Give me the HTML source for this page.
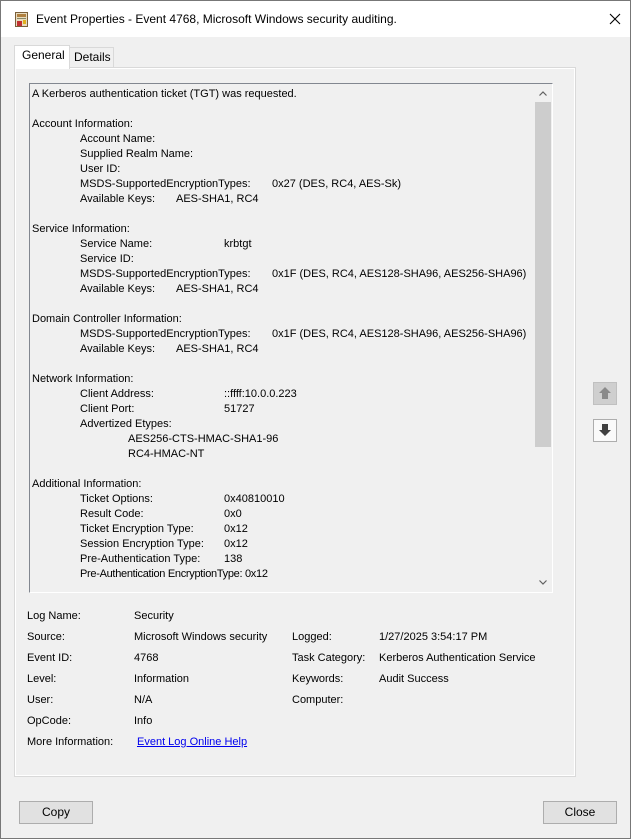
<!DOCTYPE html>
<html><head><meta charset="utf-8"><style>
*{margin:0;padding:0;box-sizing:border-box}
body{width:631px;height:839px;background:#fff;font-family:"Liberation Sans",sans-serif;font-size:11px;color:#000;position:relative;overflow:hidden}
.a{position:absolute;white-space:pre}
#win{position:absolute;left:0;top:0;width:631px;height:839px;border:1px solid #777;background:#f0f0f0}
#title{position:absolute;left:0;top:0;width:629px;height:36px;background:#fff}
.t{position:absolute;white-space:pre;line-height:15px}
.btn{position:absolute;background:#e1e1e1;border:1px solid #adadad;text-align:center;line-height:20px;font-size:12px}
</style></head><body>
<div id="win">
<div id="title">
<svg class="a" style="left:14px;top:11px" width="14" height="15" viewBox="0 0 14 15"><rect x="0.5" y="0.5" width="12" height="14" fill="#e8dcc0" stroke="#7a5f3a"/><rect x="2" y="2" width="9" height="3" fill="#b08040"/><rect x="2" y="6" width="9" height="1" fill="#886"/><rect x="2" y="9" width="5" height="5" fill="#c03030"/><rect x="8" y="8" width="3" height="4" fill="#e0b020"/></svg>
<div class="a" style="left:35px;top:11px;font-size:12px">Event Properties - Event 4768, Microsoft Windows security auditing.</div>
<svg class="a" style="left:608px;top:12px" width="12" height="12" viewBox="0 0 12 12"><path d="M1 1 L11 11 M11 1 L1 11" stroke="#000" stroke-width="1.1"/></svg>
</div>
<div class="a" style="left:13px;top:44px;width:56px;height:24px;background:#fff;border:1px solid #d9d9d9;border-bottom:none;z-index:2"></div>
<div class="a" style="left:21px;top:47px;font-size:12px;z-index:3">General</div>
<div class="a" style="left:68px;top:46px;width:45px;height:21px;background:#f0f0f0;border:1px solid #d9d9d9;border-bottom:none"></div>
<div class="a" style="left:73px;top:49px;font-size:12px">Details</div>
<div class="a" style="left:13px;top:66px;width:562px;height:710px;background:#f0f0f0;border:1px solid #d9d9d9;box-shadow:inset 0 0 0 1px #fff"></div>
<div class="a" style="left:28px;top:82px;width:524px;height:510px;background:#f0f0f0;border:1px solid #828790;border-right-color:#fff;border-bottom-color:#fff;overflow:hidden">
<div class="a" style="left:504px;top:0;width:18px;height:508px;background:#f0f0f0"></div>
<div class="a" style="left:505px;top:18px;width:16px;height:345px;background:#cdcdcd"></div>
<svg class="a" style="left:509px;top:7px" width="8" height="5" viewBox="0 0 8 5"><path d="M0.5 4.5 L4 1 L7.5 4.5" stroke="#606060" fill="none" stroke-width="1.2"/></svg>
<svg class="a" style="left:509px;top:496px" width="8" height="5" viewBox="0 0 8 5"><path d="M0.5 0.5 L4 4 L7.5 0.5" stroke="#606060" fill="none" stroke-width="1.2"/></svg>
<div class="t" style="left:2px;top:3px">A Kerberos authentication ticket (TGT) was requested.</div>
<div class="t" style="left:2px;top:33px">Account Information:</div>
<div class="t" style="left:50px;top:48px">Account Name:</div>
<div class="t" style="left:50px;top:63px">Supplied Realm Name:</div>
<div class="t" style="left:50px;top:78px">User ID:</div>
<div class="t" style="left:50px;top:93px">MSDS-SupportedEncryptionTypes:</div><div class="t" style="left:242px;top:93px">0x27 (DES, RC4, AES-Sk)</div>
<div class="t" style="left:50px;top:108px">Available Keys:</div><div class="t" style="left:146px;top:108px">AES-SHA1, RC4</div>
<div class="t" style="left:2px;top:138px">Service Information:</div>
<div class="t" style="left:50px;top:153px">Service Name:</div><div class="t" style="left:194px;top:153px">krbtgt</div>
<div class="t" style="left:50px;top:168px">Service ID:</div>
<div class="t" style="left:50px;top:183px">MSDS-SupportedEncryptionTypes:</div><div class="t" style="left:242px;top:183px">0x1F (DES, RC4, AES128-SHA96, AES256-SHA96)</div>
<div class="t" style="left:50px;top:198px">Available Keys:</div><div class="t" style="left:146px;top:198px">AES-SHA1, RC4</div>
<div class="t" style="left:2px;top:228px">Domain Controller Information:</div>
<div class="t" style="left:50px;top:243px">MSDS-SupportedEncryptionTypes:</div><div class="t" style="left:242px;top:243px">0x1F (DES, RC4, AES128-SHA96, AES256-SHA96)</div>
<div class="t" style="left:50px;top:258px">Available Keys:</div><div class="t" style="left:146px;top:258px">AES-SHA1, RC4</div>
<div class="t" style="left:2px;top:288px">Network Information:</div>
<div class="t" style="left:50px;top:303px">Client Address:</div><div class="t" style="left:194px;top:303px">::ffff:10.0.0.223</div>
<div class="t" style="left:50px;top:318px">Client Port:</div><div class="t" style="left:194px;top:318px">51727</div>
<div class="t" style="left:50px;top:333px">Advertized Etypes:</div>
<div class="t" style="left:98px;top:348px">AES256-CTS-HMAC-SHA1-96</div>
<div class="t" style="left:98px;top:363px">RC4-HMAC-NT</div>
<div class="t" style="left:2px;top:393px">Additional Information:</div>
<div class="t" style="left:50px;top:408px">Ticket Options:</div><div class="t" style="left:194px;top:408px">0x40810010</div>
<div class="t" style="left:50px;top:423px">Result Code:</div><div class="t" style="left:194px;top:423px">0x0</div>
<div class="t" style="left:50px;top:438px">Ticket Encryption Type:</div><div class="t" style="left:194px;top:438px">0x12</div>
<div class="t" style="left:50px;top:453px">Session Encryption Type:</div><div class="t" style="left:194px;top:453px">0x12</div>
<div class="t" style="left:50px;top:468px">Pre-Authentication Type:</div><div class="t" style="left:194px;top:468px">138</div>
<div class="t" style="left:50px;top:483px;letter-spacing:-0.3px">Pre-Authentication EncryptionType: 0x12</div>
</div>
<div class="a" style="left:592px;top:381px;width:24px;height:23px;background:#cfcfcf;border:1px solid #c0c0c0"></div>
<svg class="a" style="left:597px;top:385px" width="14" height="14" viewBox="0 0 14 14"><path d="M7 1 L13 7 H10 V13 H4 V7 H1 Z" fill="#8a8a8a"/></svg>
<div class="a" style="left:592px;top:418px;width:24px;height:23px;background:#fafafa;border:1px solid #adadad"></div>
<svg class="a" style="left:597px;top:422px" width="14" height="14" viewBox="0 0 14 14"><path d="M4 1 H10 V7 H13 L7 13 L1 7 H4 Z" fill="#404040"/></svg>
<div class="t" style="left:26px;top:608px">Log Name:</div><div class="t" style="left:133px;top:608px">Security</div>
<div class="t" style="left:26px;top:629px">Source:</div><div class="t" style="left:133px;top:629px">Microsoft Windows security</div>
<div class="t" style="left:291px;top:629px">Logged:</div><div class="t" style="left:378px;top:629px">1/27/2025 3:54:17 PM</div>
<div class="t" style="left:26px;top:650px">Event ID:</div><div class="t" style="left:133px;top:650px">4768</div>
<div class="t" style="left:291px;top:650px">Task Category:</div><div class="t" style="left:378px;top:650px">Kerberos Authentication Service</div>
<div class="t" style="left:26px;top:671px">Level:</div><div class="t" style="left:133px;top:671px">Information</div>
<div class="t" style="left:291px;top:671px">Keywords:</div><div class="t" style="left:378px;top:671px">Audit Success</div>
<div class="t" style="left:26px;top:692px">User:</div><div class="t" style="left:133px;top:692px">N/A</div>
<div class="t" style="left:291px;top:692px">Computer:</div>
<div class="t" style="left:26px;top:713px">OpCode:</div><div class="t" style="left:133px;top:713px">Info</div>
<div class="t" style="left:26px;top:734px">More Information:</div><div class="t" style="left:136px;top:734px;color:#0000ee;text-decoration:underline">Event Log Online Help</div>
<div class="btn" style="left:18px;top:800px;width:74px;height:23px">Copy</div>
<div class="btn" style="left:542px;top:800px;width:74px;height:23px">Close</div>
</div>
</body></html>
